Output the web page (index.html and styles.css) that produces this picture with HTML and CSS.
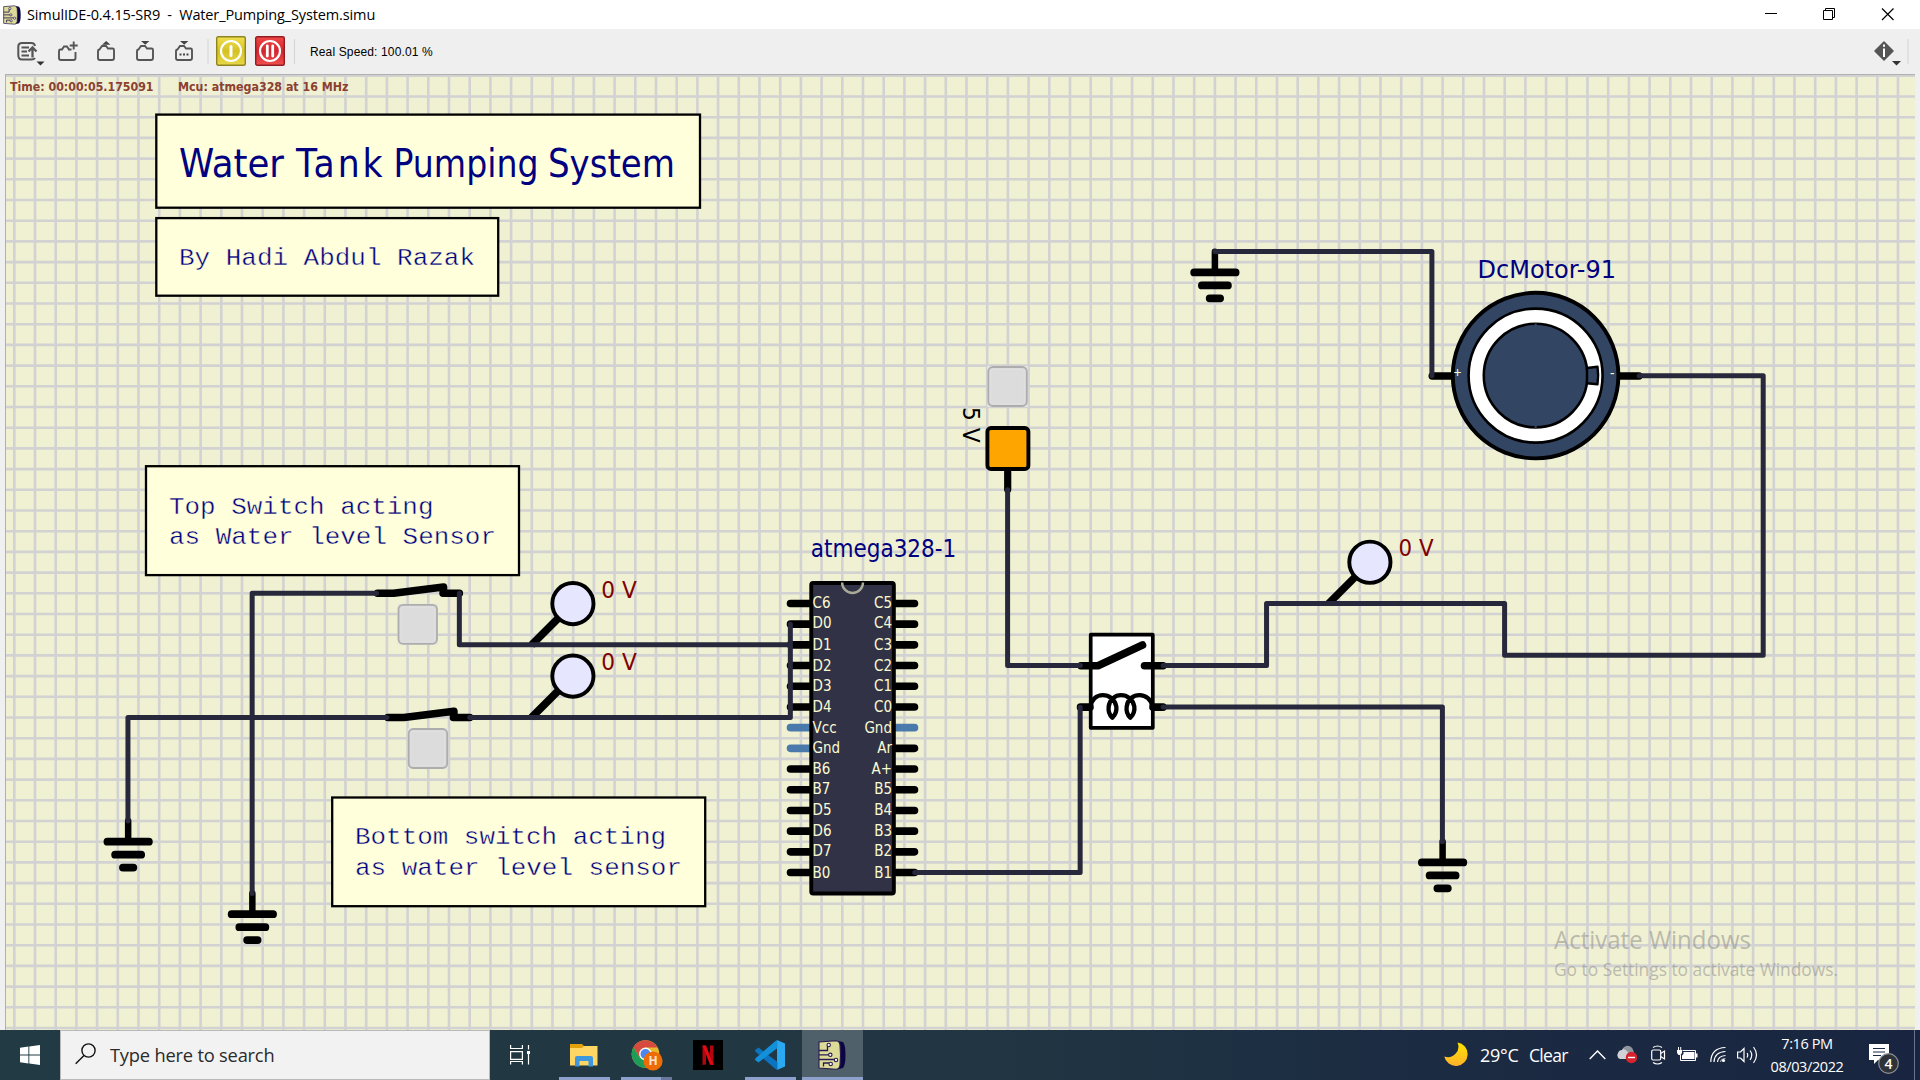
FILE: index.html
```html
<!DOCTYPE html>
<html lang="en">
<head>
<meta charset="utf-8">
<title>SimulIDE-0.4.15-SR9 - Water_Pumping_System.simu</title>
<link rel="stylesheet" href="styles.css">
</head>
<body>
<svg width="0" height="0" class="defs">
  <defs>
    <symbol id="chip" viewBox="0 0 28 30">
      <path d="M20 1 L25 2 Q27.500 5 27.500 15 Q27.500 25 25 28 L19 29.500 Z" fill="#0c0544"/>
      <path d="M1 2 L18 .7 Q21.500 1 22 5 Q23 15 22 25 Q21.500 29 18 29.300 L1 28 Z" fill="#dcdc98" stroke="#281a50" stroke-width="1.100"/>
      <path d="M1 10.500 H9.500 V6 M1 14.800 H11 M1 19.500 H16.500 M5.500 26.500 V23 H11" fill="none" stroke="#281a50" stroke-width="1.300"/>
      <g fill="#fff" stroke="#281a50" stroke-width="1.100"><circle cx="10.700" cy="5" r="1.700"/><circle cx="12.300" cy="14.800" r="1.700"/><circle cx="18" cy="20" r="1.700"/><circle cx="12.700" cy="24" r="1.700"/></g>
    </symbol>
    <g id="ground">
      <path d="M0 0V19" stroke-width="6.500"/>
      <path d="M-20.700 20.700H20.700M-13 33.700H13M-5.200 46.600H5.200" stroke-width="7.800"/>
    </g>
    <g id="probe">
      <path d="M0 0L27 -27" stroke-width="7.600" stroke-linecap="butt"/>
      <circle cx="41.400" cy="-41.400" r="20.600" fill="#e6e6ff" stroke-width="3.900"/>
    </g>
    <g id="button">
      <rect width="40.500" height="41" fill="#e6e6e0"/>
      <rect x="1" y="1" width="38.500" height="39" rx="4.500" fill="#dcdcdc" stroke="#adadad" stroke-width="1.800"/>
      <rect x="3.500" y="3.500" width="33.500" height="34" rx="3" fill="none" stroke="#e0e0e0"/>
    </g>
    <g id="switch">
      <path d="M1 0H17L67 -6.300V-2M66.500 0H82.800" stroke-width="7.600"/>
    </g>
  </defs>
</svg>

<header class="titlebar">
  <svg class="app-icon" width="18" height="20" preserveAspectRatio="none"><use href="#chip" width="18" height="20"/></svg>
  <span class="title">SimulIDE-0.4.15-SR9&nbsp; -&nbsp; Water_Pumping_System.simu</span>
  <svg class="window-buttons" width="155" height="29" fill="none" stroke="#000">
    <path d="M0 13.500H12"/>
    <path d="M58.500 10.500H67.500V19.500H58.500ZM60.500 10V8.500H69.500V17.500H68"/>
    <path d="M117 8.500L128.500 20M128.500 8.500L117 20" stroke-width="1.200"/>
  </svg>
</header>

<nav class="toolbar">
  <svg class="tool" viewBox="0 0 39 45"><g fill="none" stroke="#555" stroke-width="2">
    <path d="M19 17Q18.500 14 15.500 14H6Q2.300 14 2.300 17.500V26Q2.300 30.500 6 30.500H15.500Q18 30.500 19 29"/>
    <path d="M5.500 18.500H13M5.500 22.500H11M5.500 26.500H13" stroke-width="2.200"/><path d="M16.500 28.500V19.500M12.500 22.500L16.500 18.500L20.500 22.500" stroke-width="2.300"/></g>
    <path d="M20.500 32.500H28.500L24.500 36.500Z" fill="#333"/></svg>
  <svg class="tool" viewBox="0 0 39 45"><path d="M14 20.500L12 17.500H9L7 20.500H5.500Q4 20.500 4 22V29Q4 31 6 31H18.500Q20.500 31 20.500 29V23M13 20.500H16.500M18.700 12.500V20.500M14.700 16.500H22.700" fill="none" stroke="#555" stroke-width="1.900"/></svg>
  <svg class="tool" viewBox="0 0 39 45"><path d="M5.500 20.500L8 17H12L14 19.500H18.500Q20 19.500 20 21V29Q20 31 18 31H6Q4 31 4 29V22Q4 20.500 5.500 20.500Z" fill="none" stroke="#555" stroke-width="1.900"/><path d="M8 15.800L12.200 12L16.400 15.800Z" fill="#444"/></svg>
  <svg class="tool" viewBox="0 0 39 45"><path d="M5.500 20.500L8 17H12L14 19.500H18.500Q20 19.500 20 21V29Q20 31 18 31H6Q4 31 4 29V22Q4 20.500 5.500 20.500Z" fill="none" stroke="#555" stroke-width="1.900"/><path d="M8 12L12.200 15.800L16.400 12Z" fill="#444"/></svg>
  <svg class="tool" viewBox="0 0 39 45"><path d="M5.500 20.500L8 17H12L14 19.500H18.500Q20 19.500 20 21V29Q20 31 18 31H6Q4 31 4 29V22Q4 20.500 5.500 20.500Z" fill="none" stroke="#555" stroke-width="1.900"/><path d="M8 12L12.200 15.800L16.400 12Z" fill="#444"/><path d="M7.500 25.500H17" stroke="#444" stroke-width="2" stroke-dasharray="2 1.500"/><path d="M36 10V35" stroke="#d4d4d4"/></svg>
  <svg class="run" viewBox="0 0 30 30">
    <defs>
      <linearGradient id="yellow" x2="0" y2="1"><stop stop-color="#f0e050"/><stop offset=".5" stop-color="#d4c224"/><stop offset="1" stop-color="#e8d848"/></linearGradient>
      <linearGradient id="red" x2="0" y2="1"><stop stop-color="#f04848"/><stop offset=".5" stop-color="#d4252d"/><stop offset="1" stop-color="#f05050"/></linearGradient>
    </defs>
    <rect x=".7" y=".7" width="28.600" height="28.600" rx="1.500" fill="url(#yellow)" stroke="#8f8420" stroke-width="1.400"/>
    <circle cx="15" cy="15" r="10" fill="none" stroke="#fff" stroke-width="2.200"/><path d="M15 10.500V19.500" stroke="#fff" stroke-width="3" stroke-linecap="round"/>
  </svg>
  <svg class="run" viewBox="0 0 30 30">
    <rect x=".7" y=".7" width="28.600" height="28.600" rx="1.500" fill="url(#red)" stroke="#931c20" stroke-width="1.400"/>
    <circle cx="15" cy="15" r="10" fill="none" stroke="#fff" stroke-width="2.200"/><path d="M12.300 10V20M17.700 10V20" stroke="#fff" stroke-width="2.800" stroke-linecap="round"/>
  </svg>
  <span class="separator"></span>
  <span class="speed">Real Speed: 100.01 %</span>
  <svg class="info" width="46" height="45">
    <path d="M10 13L19 22L10 31L1 22Z" fill="#555" stroke="#555" stroke-width="1.500" stroke-linejoin="round"/>
    <path d="M10 19.500V28M10 15.500V17.700" stroke="#fff" stroke-width="2"/><path d="M18 32H27L22.500 36.500Z" fill="#333"/><path d="M34 10V35" stroke="#d4d4d4"/>
  </svg>
</nav>

<main class="workspace">
<svg class="circuit" viewBox="5 74 1910 956">
  <rect x="5" y="74" width="1910" height="956" fill="#f0f0d2"/>
  <g stroke="#d2d2d2" fill="none">
    <path d="M13 552H1915" stroke-width="956" stroke-dasharray="2.600 18.100"/>
    <path d="M960 74.500V1030" stroke-width="1910" stroke-dasharray="2.600 18.100"/>
  </g>
  <path d="M5 74.500H1915M5.500 74V1030" stroke="#b0b0b0"/>

  <g class="status">
    <text x="10" y="91" textLength="143.500" lengthAdjust="spacingAndGlyphs">Time: 00:00:05.175091</text>
    <text x="178" y="91" textLength="170.500" lengthAdjust="spacingAndGlyphs">Mcu: atmega328 at 16 MHz</text>
  </g>

  <g fill="#ffffdc" stroke="#000" stroke-width="2.300">
    <rect x="156.300" y="114.600" width="543.700" height="93.100"/>
    <rect x="156.300" y="218.100" width="341.900" height="77.600"/>
    <rect x="146" y="466.200" width="373" height="108.900"/>
    <rect x="332.200" y="797.500" width="373" height="108.700"/>
  </g>
  <g class="heading">
    <text x="179" y="177" textLength="105" lengthAdjust="spacingAndGlyphs">Water</text>
    <text x="296" y="177" textLength="86.500">Tank</text>
    <text x="393.500" y="177" textLength="145" lengthAdjust="spacingAndGlyphs">Pumping</text>
    <text x="548" y="177" textLength="127" lengthAdjust="spacingAndGlyphs">System</text>
  </g>
  <g class="note">
    <text x="179" y="265" textLength="296" lengthAdjust="spacingAndGlyphs">By Hadi Abdul Razak</text>
    <text x="169" y="513.500" textLength="264.500" lengthAdjust="spacingAndGlyphs">Top Switch acting</text>
    <text x="169" y="544.200" textLength="327" lengthAdjust="spacingAndGlyphs">as Water level Sensor</text>
    <text x="355" y="844.200" textLength="311" lengthAdjust="spacingAndGlyphs">Bottom switch acting</text>
    <text x="355" y="875" textLength="327" lengthAdjust="spacingAndGlyphs">as water level sensor</text>
  </g>

  <!-- component bodies and pins -->
  <g fill="none" stroke="#000" stroke-linecap="round" stroke-linejoin="round">
    <use href="#ground" x="128.150" y="821"/>
    <use href="#ground" x="252.350" y="893.450"/>
    <use href="#ground" x="1214.900" y="251.750"/>
    <use href="#ground" x="1442.600" y="841.700"/>
    <use href="#switch" x="376.550" y="593.300"/>
    <use href="#switch" x="386.900" y="717.500"/>
    <use href="#probe" x="531.500" y="645.050"/>
    <use href="#probe" x="531.500" y="717.500"/>
    <use href="#probe" x="1328.500" y="603.650"/>

    <path stroke-width="7.600" d="M790.500 603.450H809M790.500 624.150H809M790.500 644.850H809M790.500 665.550H809M790.500 686.250H809M790.500 706.950H809M790.500 769.050H809M790.500 789.750H809M790.500 810.450H809M790.500 831.150H809M790.500 851.850H809M790.500 872.550H809
      M896 603.450H914.500M896 624.150H914.500M896 644.850H914.500M896 665.550H914.500M896 686.250H914.500M896 706.950H914.500M896 748.350H914.500M896 769.050H914.500M896 789.750H914.500M896 810.450H914.500M896 831.150H914.500M896 851.850H914.500M896 872.550H914.500"/>
    <path stroke="#4a7aac" stroke-width="7.600" d="M790.500 727.650H809M790.500 748.350H809M896 727.650H914.500"/>
    <rect x="811.250" y="582.950" width="82.600" height="310.500" rx="2" fill="#323246" stroke-width="3.900"/>
    <path d="M842.100 582.500A10.400 10.400 0 0 0 863 582.500" stroke="#aaaa98" stroke-width="2.400" stroke-linecap="butt"/>

    <path d="M1007.700 472V489.500" stroke-width="7.200"/>
    <rect x="987.400" y="428" width="41" height="41" rx="3.500" fill="#ffa500" stroke-width="3.900"/>

    <path d="M1432.200 375.950H1452M1619 375.950H1639" stroke-width="7.400"/>
    <circle cx="1535.600" cy="375.600" r="82.800" fill="#324664" stroke-width="3.900"/>
    <circle cx="1535.600" cy="375.600" r="67" fill="#fff" stroke-width="2.600"/>
    <circle cx="1535.600" cy="375.600" r="51.800" fill="#324664" stroke-width="2.600"/>
    <path d="M1587 368L1597.500 366.800Q1598.800 375.500 1597.500 384.300L1587 383.200Z" fill="#324664" stroke-width="2.400"/>
    <path d="M1535.700 323.500V326M1535.700 425.500V428" stroke="#324664" stroke-width="2" stroke-linecap="butt"/>

    <rect x="1090.700" y="634.700" width="62.100" height="93.100" fill="#fff" stroke-width="3.700"/>
    <path d="M1081 665.750H1098L1142.500 645M1144.500 665.750H1163M1080.500 707.150H1090M1153 707.150H1163" stroke-width="7.600"/>
    <path transform="translate(940 350) scale(.33333)" stroke-width="13" d="M452 1071C455 1024 520 1024 529 1070C531 1085 525 1095 517 1103C509 1095 504 1085 506 1070C512 1024 574 1024 583 1070C585 1085 579 1095 571 1103C563 1095 558 1085 560 1070C566 1024 632 1024 637 1071"/>
  </g>
  <use href="#button" x="397.500" y="603.800"/>
  <use href="#button" x="407.700" y="728"/>
  <use href="#button" x="987.300" y="366"/>

  <!-- wires -->
  <g fill="none" stroke="#28283c" stroke-width="5" stroke-linecap="round" stroke-linejoin="round">
    <path d="M376.550 593.300H252.150V893.450"/>
    <path d="M459.350 593.300V644.850H790"/>
    <path d="M386.900 717.400H127.950V821"/>
    <path d="M469.700 717.400H790.350V624.350"/>
    <path d="M914.750 872.550H1080.150V707.150"/>
    <path d="M1007.600 489.800V665.600H1080.350"/>
    <path d="M1163.150 665.600H1266.550V603.450H1504.600V655.300H1763.200V375.850H1639.200"/>
    <path d="M1163.150 706.950H1442.400V841.700"/>
    <path d="M1214.900 251.600H1431.900V375.850"/>
  </g>

  <g class="label">
    <text x="810.800" y="556.500" textLength="145.500" lengthAdjust="spacingAndGlyphs">atmega328-1</text>
    <text x="1477.500" y="277.700" textLength="138.500" lengthAdjust="spacingAndGlyphs">DcMotor-91</text>
  </g>
  <g class="volts">
    <text x="601.300" y="597.500" textLength="35.500" lengthAdjust="spacingAndGlyphs">0 V</text>
    <text x="601.300" y="669.800" textLength="35.500" lengthAdjust="spacingAndGlyphs">0 V</text>
    <text x="1398.500" y="555.700" textLength="35" lengthAdjust="spacingAndGlyphs">0 V</text>
    <text class="supply" transform="translate(963 407) rotate(90)" textLength="35.500" lengthAdjust="spacingAndGlyphs">5 V</text>
  </g>
  <g class="pin">
    <text x="812.600" y="608">C6</text><text x="812.600" y="628">D0</text><text x="812.600" y="649.500">D1</text><text x="812.600" y="670.500">D2</text><text x="812.600" y="691">D3</text><text x="812.600" y="711.500">D4</text><text x="812.600" y="732.500">Vcc</text><text x="812.600" y="753.200">Gnd</text><text x="812.600" y="773.700">B6</text><text x="812.600" y="794.200">B7</text><text x="812.600" y="815.200">D5</text><text x="812.600" y="836">D6</text><text x="812.600" y="856.300">D7</text><text x="812.600" y="877.500">B0</text>
    <text class="sign" x="1453.500" y="378">+</text><text class="sign" x="1610" y="378">-</text>
  </g>
  <g class="pin end">
    <text x="892" y="608">C5</text><text x="892" y="628">C4</text><text x="892" y="649.500">C3</text><text x="892" y="670.500">C2</text><text x="892" y="691">C1</text><text x="892" y="711.500">C0</text><text x="892" y="732.500">Gnd</text><text x="892" y="753.200">Ar</text><text x="892" y="773.700">A+</text><text x="892" y="794.200">B5</text><text x="892" y="815.200">B4</text><text x="892" y="836">B3</text><text x="892" y="856.300">B2</text><text x="892" y="877.500">B1</text>
  </g>
  <g class="watermark">
    <text x="1554" y="949.300" textLength="197" lengthAdjust="spacingAndGlyphs">Activate Windows</text>
    <text class="small" x="1554" y="976" textLength="284" lengthAdjust="spacingAndGlyphs">Go to Settings to activate Windows.</text>
  </g>
</svg>
</main>

<footer class="taskbar">
  <div class="start"><svg width="20" height="20" fill="#fff"><path d="M0 2.800L8.400 1.500V9.500H0ZM9.300 1.400L20 0V9.500H9.300ZM0 10.400H8.400V18.500L0 17.300ZM9.300 10.400H20V20L9.300 18.600Z"/></svg></div>
  <div class="search">
    <svg width="22" height="22" fill="none" stroke="#111" stroke-width="1.400"><circle cx="13.500" cy="7.500" r="6.600"/><path d="M9 12.500L.7 20.800"/></svg>
    <span>Type here to search</span>
  </div>
  <div class="taskview"><svg width="20" height="20" fill="none" stroke="#fff" stroke-width="1.200"><path d="M.6 0V3.500H12.400V0M.6 6.600H12.400V14.400H.6ZM.6 19.500V16.500H12.400V19.500M18.500 0V4.500M18.500 9V19.500"/><path d="M17 6H20V9H17Z" fill="#fff" stroke="none"/></svg></div>
  <div class="app running"><svg width="28" height="24"><path d="M0 1H12L14 3V8H0Z" fill="#e3a008"/><path d="M0 5H12L14 3H27.500V22.500H0Z" fill="#ffd563"/><path d="M5 23.500V15Q5 13 7 13H21Q23 13 23 15V23.500H18.500V18H9.500V23.500Z" fill="#3f97dd"/></svg></div>
  <div class="app running grouped"><svg width="30" height="32" viewBox="0 0 30 32" overflow="visible"><circle cx="14.500" cy="15" r="13.800" fill="#e9b82b"/><path d="M14.500 1.200A13.800 13.800 0 0 1 26.500 8.500H14.500L8.500 18.500L2.500 8.100A13.800 13.800 0 0 1 14.500 1.200Z" fill="#d64a40"/><path d="M2.500 8.100A13.800 13.800 0 0 0 14.500 28.800L20 19L8.500 18.500Z" fill="#1d9d58"/><circle cx="14.500" cy="15" r="6.400" fill="#fff"/><circle cx="14.500" cy="15" r="5" fill="#4a87ee"/><circle cx="22" cy="22" r="9.600" fill="#ee6c05"/><text class="profile" x="22" y="26.200">H</text></svg></div>
  <div class="app"><svg width="30" height="30"><path d="M0 0H30V30H0Z"/><path d="M9.500 5.500H13V24.500L9.500 25ZM17 5.500H20.500V25L17 24.500Z" fill="#b1060f"/><path d="M9.500 5.500H13L20.500 25L17 24.500Z" fill="#e50914"/></svg></div>
  <div class="app running"><svg width="30" height="30"><path d="M22 0L30 3.500V26.500L22 30Z" fill="#2aa8f2"/><path d="M0 10L3.500 7.500L22.500 22V30L20.500 29L.5 11.800Z" fill="#0b74c0"/><path d="M0 20L3.500 22.500L22.500 8V0L20.500 1L.5 18.200Z" fill="#1390da"/></svg></div>
  <div class="app running active"><svg width="28" height="30"><use href="#chip" width="28" height="30"/></svg></div>

  <div class="tray">
    <svg width="24" height="24"><defs><linearGradient id="moon" x2="0" y2="1"><stop stop-color="#ffe500"/><stop offset="1" stop-color="#ffb02c"/></linearGradient></defs><path d="M13.500 .5A11.800 11.800 0 1 1 .3 14.500A10.500 10.500 0 0 0 13.500 .5Z" fill="url(#moon)"/></svg>
    <span class="weather">29°C</span>
    <span class="weather sky">Clear</span>
    <svg width="18" height="12" fill="none" stroke="#fff" stroke-width="1.400"><path d="M.7 10L8.500 2L16.300 10"/></svg>
    <svg class="cloud" width="22" height="20"><path d="M3 14Q-1 12 1 8Q2 5 5 5Q7 1 11 2Q15 2 16 7Q19 9 17 14Z" fill="#cfd2d6"/><path d="M6 4Q8 0 12 1Q16 2 17 8L12 10Q11 5 6 4Z" fill="#8e959e"/><circle cx="14.500" cy="12.500" r="5.700" fill="#d8232e"/><path d="M11 12.500H18" stroke="#fff" stroke-width="1.400"/></svg>
    <svg width="16" height="20" fill="none" stroke="#fff" stroke-width="1.200"><rect x=".7" y="5" width="9" height="10" rx="1.500"/><path d="M9.700 8.500L13.500 6V14L9.700 11.500M2 2.500Q6.500 -.5 11 2.500M2 17.500Q6.500 20.500 11 17.500"/></svg>
    <svg width="22" height="16"><path d="M5.500 3.500H18.500V13.500H3.500V8" fill="none" stroke="#fff"/><path d="M6.500 5H17.500V12H5V8.500L6.500 7ZM19 6.500H20.500V10.500H19ZM0 3H5V6L3.500 8H1.500L0 6ZM1 0H2V3H1ZM3.200 0H4.200V3H3.200Z" fill="#fff"/></svg>
    <svg width="17" height="18" fill="none" stroke="#fff" stroke-width="1.200"><path d="M.8 16Q1 2 15.500 1.500M4 16Q4.500 6 15.500 5.500M7.500 16Q8 10 15.500 9.500"/><circle cx="13.500" cy="14.500" r="1.600" fill="#fff" stroke="none"/><path d="M10.500 16Q11 12.500 15.500 12.500" opacity=".6"/></svg>
    <svg width="22" height="20" fill="none" stroke="#fff" stroke-width="1.200"><path d="M.6 7H3.500L7 3.500V16.500L3.500 13H.6ZM10 8Q11.500 10 10 12.500M13 5.500Q16.500 10 13 15M16.500 2Q22.500 10 16.500 18"/></svg>
    <div class="clock"><span>7:16 PM</span><span>08/03/2022</span></div>
    <svg class="notices" width="32" height="32"><path d="M0 1H20V17H9L5 21V17H0Z" fill="#fff"/><path d="M4 5.500H16M4 9H16M4 12.500H12" stroke="#1b2a44" stroke-width="1.200"/><circle cx="19.500" cy="20.500" r="9.800" fill="#2f3338" stroke="#8b9098" stroke-width="1.200"/><text x="19.500" y="25.500">4</text></svg>
  </div>
</footer>
</body>
</html>
```
FILE: styles.css
```css
* { box-sizing: border-box; }
body { margin: 0; width: 1920px; height: 1080px; overflow: hidden; display: flex; flex-direction: column; background: #f0f0f0; font-family: "Open Sans", "Noto Sans", sans-serif; }
svg { display: block; flex: none; }
.defs { display: none; }

.titlebar { height: 29px; flex: none; display: flex; align-items: center; padding: 0 0 0 3px; background: #fff; }
.title { margin-left: 6px; font-size: 14.5px; letter-spacing: -.13px; color: #000; white-space: nowrap; }
.window-buttons { margin-left: auto; }

.toolbar { height: 45px; flex: none; display: flex; align-items: center; padding-left: 16px; background: #efefef; }
.tool { width: 39px; height: 45px; }
.run { width: 30px; height: 30px; margin: 0 4px 1px 5px; }
.separator { width: 1px; height: 25px; margin-left: 5px; background: #d4d4d4; }
.speed { margin-left: 15px; font: 12px "Liberation Sans", sans-serif; letter-spacing: .14px; color: #000; }
.info { margin-left: auto; }

.workspace { height: 956px; flex: none; padding: 0 5px; }
.circuit { width: 1910px; height: 956px; }
.circuit text { font-family: "DejaVu Sans Condensed", "DejaVu Sans", sans-serif; white-space: pre; }
.status text { font-size: 12.6px; font-weight: 700; fill: #8b4030; }
.heading text { font-size: 38.500px; fill: #000080; }
.circuit .note text { font-family: "Liberation Mono", monospace; font-size: 23.800px; fill: #000080; stroke: #ffffdc; stroke-width: .4px; }
.label text { font-size: 25px; fill: #000080; }
.volts text { font-size: 22.800px; fill: #800000; }
.volts .supply { fill: #000; }
.pin text { font-size: 15px; fill: #fafad2; }
.circuit .pin .sign { font: 14px "Noto Sans", sans-serif; }
.end text { text-anchor: end; }
.circuit .watermark text { font-family: "Open Sans", "Noto Sans", sans-serif; font-size: 25px; fill: #8c8c8c; fill-opacity: .55; }
.circuit .watermark .small { font-size: 18.500px; }

.taskbar { height: 50px; flex: none; display: flex; background: linear-gradient(90deg, #213a43, #213642 50%, #1b2b42 75%, #192540); color: #fff; }
.start { width: 60px; display: flex; align-items: center; justify-content: center; }
.search { width: 430px; display: flex; align-items: center; gap: 13px; padding: 0 0 2px 14px; background: #f2f2f2; border: 1px solid #b9b9b9; color: #2b2b2b; font-size: 18.300px; letter-spacing: -.2px; }
.taskview { width: 60px; margin-right: 4px; display: flex; align-items: center; justify-content: center; }
.app { width: 62px; padding: 0 2px 1px 0; display: flex; align-items: center; justify-content: center; }
.running { background: linear-gradient(#8ea0cc, #8ea0cc) 5px 47px / 51px 3px no-repeat; }
.grouped { background: linear-gradient(90deg, #8ea0cc 40px, #69779c 40px) 5px 47px / 51px 3px no-repeat; }
.grouped svg { overflow: visible; }
.active { width: 61px; background: linear-gradient(#8ea0cc, #8ea0cc) 0 47px / 61px 3px no-repeat #4f606a; }
.profile { font: 700 12px "Open Sans", sans-serif; fill: #ffe6d0; text-anchor: middle; }

.tray { margin-left: auto; margin-right: 5px; display: grid; grid-template-columns: 36px 49px 60px 28px 34px 26px 33px 27px 23px 109px 45px; align-items: center; border-right: 1px solid #69758a; }
.tray > svg:first-child { margin-bottom: 2px; }
.weather { font-size: 18px; letter-spacing: -.3px; white-space: nowrap; }
.sky { font-size: 17.500px; letter-spacing: -.7px; }
.clock { width: 94px; display: flex; flex-direction: column; align-items: center; font-size: 14.500px; line-height: 23px; letter-spacing: -.4px; }
.notices { align-self: end; margin-bottom: 5px; }
.notices text { font: 600 14px "Open Sans", sans-serif; fill: #fff; text-anchor: middle; }
```
